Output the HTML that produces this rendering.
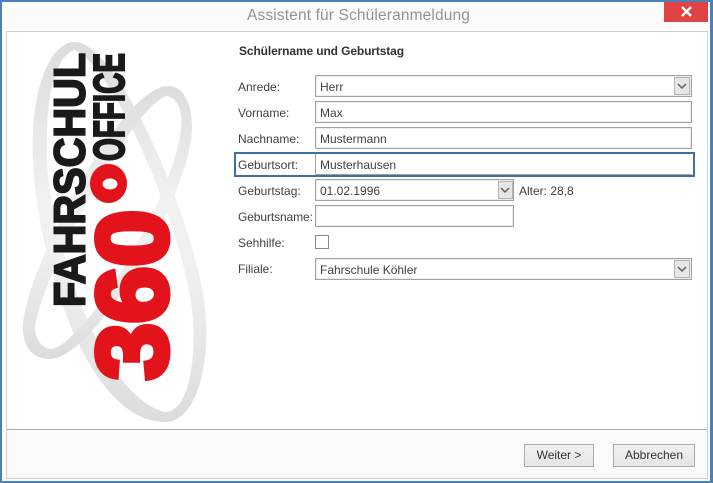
<!DOCTYPE html>
<html lang="de"><head><meta charset="utf-8"><title>Assistent für Schüleranmeldung</title>
<style>
html,body{margin:0;padding:0}
body{width:713px;height:483px;overflow:hidden;position:relative;background:#fbfbfb;font-family:"Liberation Sans",sans-serif;font-size:12px;color:#404040}
div{position:absolute;box-sizing:border-box}
svg{position:absolute;left:0;top:0}
.f{background:#fff;border:1px solid #a2a2a2;box-shadow:inset 0 0 0 1px #ececec;padding-left:4px;line-height:22px;height:22px}
.l{left:238px;line-height:16px;white-space:nowrap}
.d{background:#e6e6e6;border:1px solid #b4b4b4}
.b{background:linear-gradient(#f2f2f2,#e5e5e5);border:1px solid #acacac;text-align:center;line-height:21px;height:23px;top:444px;color:#333}
</style></head><body>
<div style="left:0;top:0;width:713px;height:483px;border:solid #4a80b8;border-width:2px 3px 2px 2px"></div>
<div style="left:247px;top:7px;font-size:15.5px;letter-spacing:.14px;line-height:18px;color:#929292;white-space:nowrap">Assistent für Schüleranmeldung</div>
<div style="left:664px;top:2px;width:44px;height:20px;background:#e04343"></div>
<div style="left:6px;top:31px;width:702px;height:448px;border:1px solid #cfcfcf;background:#fff"></div>
<div style="left:7px;top:429px;width:700px;height:49px;background:#fafafa;border-top:1px solid #b0b0b0"></div>

<svg width="713" height="483" viewBox="0 0 713 483">
<defs><linearGradient id="g" x1="0" y1="0" x2="0" y2="1">
<stop offset="0" stop-color="#dcdcdc"/><stop offset=".42" stop-color="#f1f1f1"/><stop offset=".6" stop-color="#f0f0f0"/><stop offset="1" stop-color="#dcdcdc"/></linearGradient></defs>
<path fill="url(#g)" fill-rule="evenodd" d="M75 42C48 42 30 95 33 160C36 250 85 422 165 422C195 422 209 370 206 320C203 240 120 42 75 42ZM74 50C54 58 45 100 47 160C50 240 102 398 165 412C186 412 196 370 193 320C188 240 114 64 74 50Z"/>
<path fill="url(#g)" fill-rule="evenodd" d="M168 86C120 86 20 280 23 330C24 350 35 359 50 359C95 359 194 190 192 125C191 100 182 86 168 86ZM166 96C128 112 40 280 35 328C36 342 44 349 52 349C90 340 176 190 181 128C183 108 176 97 166 96Z"/>
<g font-family="'Liberation Sans',sans-serif" font-weight="700">
<text transform="translate(84.500 307) rotate(-90)" font-size="44" textLength="254" lengthAdjust="spacingAndGlyphs" fill="#1a1a1a" stroke="#1a1a1a" stroke-width="2">FAHRSCHUL</text>
<text transform="translate(124 161) rotate(-90)" font-size="44" textLength="108" lengthAdjust="spacingAndGlyphs" fill="#1a1a1a" stroke="#1a1a1a" stroke-width="2">OFFICE</text>
<text transform="translate(166.500 380) rotate(-90)" font-size="99" textLength="170" lengthAdjust="spacingAndGlyphs" fill="#e3131b" stroke="#e3131b" stroke-width="6">360</text>
</g>
<path fill="#e3131b" fill-rule="evenodd" d="M108.500 164a18.500 19.500 0 1 0 .01 0ZM110 178.500a7.500 5.500 0 1 1 -.01 0Z"/>
<path d="M682 7l9 9M691 7l-9 9" stroke="#fff" stroke-width="2.400"/>
</svg>

<div style="left:239px;top:43px;font-weight:700;line-height:16px;letter-spacing:-.12px;color:#333">Schülername und Geburtstag</div>

<div class="l" style="top:79px">Anrede:</div>
<div class="l" style="top:105px">Vorname:</div>
<div class="l" style="top:131px">Nachname:</div>
<div class="l" style="top:183px">Geburtstag:</div>
<div class="l" style="top:209px;letter-spacing:-.1px">Geburtsname:</div>
<div class="l" style="top:235px">Sehhilfe:</div>
<div class="l" style="top:261px">Filiale:</div>

<div class="f" style="left:315px;top:75px;width:377px">Herr</div>
<div class="f" style="left:315px;top:101px;width:377px">Max</div>
<div class="f" style="left:315px;top:127px;width:377px">Mustermann</div>
<div class="f" style="left:315px;top:153px;width:377px;box-shadow:none;border-right:0">Musterhausen</div>
<div style="left:234px;top:152px;width:461px;height:25px;border:2px solid #41709f"></div>
<div class="l" style="top:157px">Geburtsort:</div>
<div class="f" style="left:315px;top:179px;width:199px">01.02.1996</div>
<div class="f" style="left:315px;top:205px;width:199px"></div>
<div style="left:315px;top:235px;width:14px;height:14px;background:#fff;border:1px solid #8a8a8a"></div>
<div class="f" style="left:315px;top:258px;width:377px">Fahrschule Köhler</div>
<div class="l" style="left:519px;top:183px">Alter: 28,8</div>

<div class="d" style="left:674px;top:77px;width:16px;height:18px"></div>
<div class="d" style="left:498px;top:181px;width:15px;height:18px"></div>
<div class="d" style="left:674px;top:260px;width:16px;height:18px"></div>
<svg width="713" height="483" viewBox="0 0 713 483">
<path d="M678 84l4 4l4 -4M501 188l4 4l4 -4M678 267l4 4l4 -4" fill="none" stroke="#606060" stroke-width="1.500"/>
</svg>

<div class="b" style="left:524px;width:70px">Weiter &gt;</div>
<div class="b" style="left:613px;width:82px">Abbrechen</div>
</body></html>
